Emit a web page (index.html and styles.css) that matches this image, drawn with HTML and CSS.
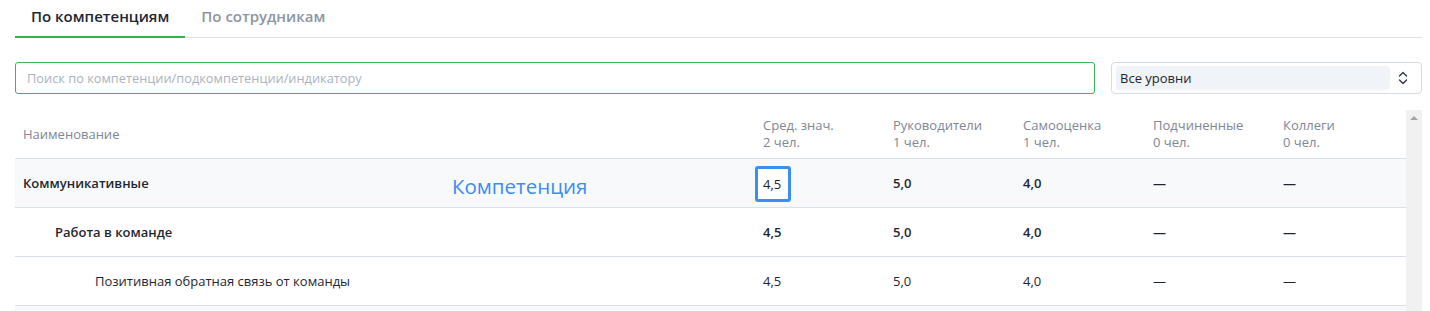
FILE: index.html
```html
<!DOCTYPE html>
<html lang="ru">
<head>
<meta charset="utf-8">
<link rel="stylesheet" href="styles.css">
</head>
<body>
<div class="page">
  <div class="tabs">
    <div class="tab active">По компетенциям</div>
    <div class="tab">По сотрудникам</div>
  </div>
  <div class="filters">
    <div class="search">Поиск по компетенции/подкомпетенции/индикатору</div>
    <div class="select">
      <div class="select-value">Все уровни</div>
      <svg class="chev" width="10" height="16" viewBox="0 0 10 16"><path d="M1.5 6 L5 2.5 L8.5 6 M1.5 10 L5 13.5 L8.5 10" fill="none" stroke="#2b3240" stroke-width="1.3" stroke-linecap="round" stroke-linejoin="round"/></svg>
    </div>
  </div>
  <div class="table-wrap">
    <div class="table">
      <div class="row head">
        <div class="cell name">Наименование</div>
        <div class="cell">Сред. знач.<br>2 чел.</div>
        <div class="cell">Руководители<br>1 чел.</div>
        <div class="cell">Самооценка<br>1 чел.</div>
        <div class="cell">Подчиненные<br>0 чел.</div>
        <div class="cell">Коллеги<br>0 чел.</div>
      </div>
      <div class="row l1">
        <div class="cell name">Коммуникативные<span class="note">Компетенция</span></div>
        <div class="cell"><span class="hl">4,5</span></div>
        <div class="cell">5,0</div>
        <div class="cell">4,0</div>
        <div class="cell">—</div>
        <div class="cell">—</div>
      </div>
      <div class="row l2">
        <div class="cell name">Работа в команде</div>
        <div class="cell">4,5</div>
        <div class="cell">5,0</div>
        <div class="cell">4,0</div>
        <div class="cell">—</div>
        <div class="cell">—</div>
      </div>
      <div class="row l3">
        <div class="cell name">Позитивная обратная связь от команды</div>
        <div class="cell">4,5</div>
        <div class="cell">5,0</div>
        <div class="cell">4,0</div>
        <div class="cell">—</div>
        <div class="cell">—</div>
      </div>
      <div class="row l1 tail"></div>
    </div>
    <div class="scrollbar"><span class="arrow"></span></div>
  </div>
</div>
</body>
</html>
```

FILE: styles.css
```css
* { box-sizing: border-box; }
html, body { margin: 0; padding: 0; background: #fff; }
body {
  font-family: "Open Sans", "Noto Sans", sans-serif;
  color: #1f2633;
  overflow: hidden;
  height: 311px;
}
.page { padding: 0 8px 0 15px; }

.tabs {
  display: flex;
  border-bottom: 1px solid #dde2ea;
  height: 38px;
}
.tab {
  padding: 4px 16px 0;
  font-size: 15px;
  font-weight: 600;
  color: #8c95a3;
  line-height: 24px;
  height: 38px;
}
.tab.active {
  color: #1f2633;
  border-bottom: 2px solid #2fb14f;
}

.filters {
  display: flex;
  gap: 16px;
  margin-top: 24px;
}
.search {
  flex: 1;
  height: 32px;
  border: 1px solid #3cb55b;
  border-radius: 3px;
  padding: 0 11px;
  font-size: 12.8px;
  line-height: 30px;
  color: #aab3c2;
}
.select {
  width: 311px;
  height: 32px;
  border: 1px solid #d6dce5;
  border-radius: 4px;
  display: flex;
  align-items: center;
  padding: 0 13px 0 4px;
  gap: 8px;
}
.select-value {
  flex: 1;
  height: 24px;
  background: #f0f3f7;
  border-radius: 4px;
  padding: 0 4px;
  font-size: 13px;
  line-height: 24px;
  color: #1f2633;
}
.chev { display: block; }

.table-wrap {
  display: flex;
  margin-top: 16px;
}
.table { width: 1391px; }
.row {
  display: grid;
  grid-template-columns: 740px repeat(5, 130px);
  border-bottom: 1px solid #d9dfe8;
  height: 49px;
  align-items: center;
  font-size: 13px;
}
.row.head {
  color: #7d8696;
  font-size: 13px;
  line-height: 17px;
}
.cell { padding-left: 8px; position: relative; }
.l1 { background: #f8f9fb; font-weight: 600; }
.l2 { font-weight: 600; }
.l2 .name { padding-left: 40px; }
.l3 .name { padding-left: 80px; }
.tail { border-bottom: none; }

.note {
  position: absolute;
  left: 437px;
  top: -2px;
  font-size: 20.5px;
  font-weight: 400;
  color: #3c8cf2;
}
.hl {
  display: inline-block;
  margin: -9px -10px -9px -8px;
  padding: 6px 7px 6px 5px;
  border: 3px solid #3a8ef6;
  border-radius: 3px;
  background: #fff;
  font-weight: 500;
  position: relative;
  top: 1px;
}

.scrollbar {
  width: 16px;
  background: #f1f1f1;
  height: 220px;
  position: relative;
}
.arrow {
  position: absolute;
  left: 4px;
  top: 6px;
  width: 0;
  height: 0;
  border-left: 4px solid transparent;
  border-right: 4px solid transparent;
  border-bottom: 4px solid #a3a3a3;
}
```
